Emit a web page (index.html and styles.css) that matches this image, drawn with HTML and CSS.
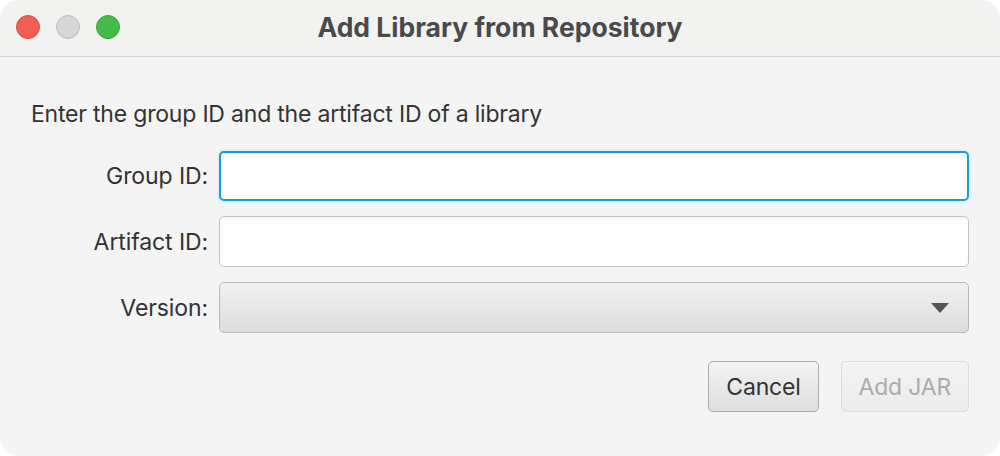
FILE: index.html
```html
<!DOCTYPE html>
<html>
<head>
<meta charset="utf-8">
<link rel="stylesheet" href="styles.css">
</head>
<body>
<div class="window">
  <div class="titlebar">
    <div class="lights">
      <span class="light red"></span>
      <span class="light gray"></span>
      <span class="light green"></span>
    </div>
    <div class="title">Add Library from Repository</div>
  </div>
  <div class="content">
    <p class="intro">Enter the group ID and the artifact ID of a library</p>
    <div class="form">
      <label class="label">Group ID:</label>
      <div class="field focused"></div>
      <label class="label">Artifact ID:</label>
      <div class="field"></div>
      <label class="label">Version:</label>
      <div class="combo">
        <svg class="arrow" width="18" height="10" viewBox="0 0 18 10"><polygon points="0,0 18,0 9,10" fill="#555"/></svg>
      </div>
    </div>
    <div class="buttons">
      <button class="btn">Cancel</button>
      <button class="btn disabled">Add JAR</button>
    </div>
  </div>
</div>
</body>
</html>
```
FILE: styles.css
```css
html, body {
  margin: 0;
  padding: 0;
  background: #ffffff;
}
body {
  font-family: Inter, "Noto Sans", sans-serif;
  color: #333;
}
.window {
  width: 1000px;
  height: 456px;
  background: #f4f4f4;
  border-radius: 20px;
  overflow: hidden;
  display: flex;
  flex-direction: column;
}
.titlebar {
  height: 56px;
  background: #f2f2f1;
  border-bottom: 1px solid #d2d2d2;
  position: relative;
  display: flex;
  align-items: center;
  justify-content: center;
  flex-shrink: 0;
}
.lights {
  position: absolute;
  left: 16px;
  top: 15px;
  display: flex;
  gap: 16px;
}
.light {
  width: 24px;
  height: 24px;
  border-radius: 50%;
  box-sizing: border-box;
}
.red { background: #f25e56; border: 1px solid #de4d45; }
.gray { background: #d6d6d6; border: 1px solid #bdbdbd; }
.green { background: #45ba48; border: 1px solid #36a83a; }
.title {
  font-weight: 700;
  font-size: 26.5px;
  color: #4a4a4a;
  margin-top: -2px;
}
.content {
  padding: 0 31px;
}
.intro {
  margin: 43px 0 0 0;
  font-size: 23px;
  letter-spacing: -0.2px;
  line-height: 28px;
  color: #333;
}
.form {
  margin-top: 23px;
  display: grid;
  grid-template-columns: 177px 1fr;
  column-gap: 11px;
  row-gap: 15px;
  align-items: center;
}
.label {
  text-align: right;
  font-size: 23px;
  letter-spacing: -0.1px;
  color: #333;
}
.field {
  height: 51px;
  box-sizing: border-box;
  background: #fff;
  border: 1px solid #c2c2c2;
  border-radius: 5px;
  box-shadow: inset 0 2px 2px rgba(0,0,0,0.04);
}
.field.focused {
  height: 50px;
  border: 2px solid #109fd8;
  box-shadow: 0 0 0 2px #dcf0f9;
}
.combo {
  height: 51px;
  box-sizing: border-box;
  border: 1px solid #b9b9b9;
  border-radius: 5px;
  background: linear-gradient(#f0f0f0, #dddddd);
  display: flex;
  align-items: center;
  justify-content: flex-end;
  padding-right: 19px;
}
.arrow { display: block; }
.buttons {
  margin-top: 28px;
  display: flex;
  justify-content: flex-end;
  gap: 22px;
}
.btn {
  height: 51px;
  box-sizing: border-box;
  font-family: Inter, "Noto Sans", sans-serif;
  font-size: 23px;
  letter-spacing: -0.2px;
  color: #333;
  border: 1px solid #acacac;
  border-radius: 5px;
  background: linear-gradient(#f3f3f3, #dedede);
  padding: 0 17px;
}
.btn.disabled {
  color: #ababab;
  border-color: #dcdcdc;
  background: linear-gradient(#f4f4f4, #ebebeb);
  padding: 0 17px;
}
```
